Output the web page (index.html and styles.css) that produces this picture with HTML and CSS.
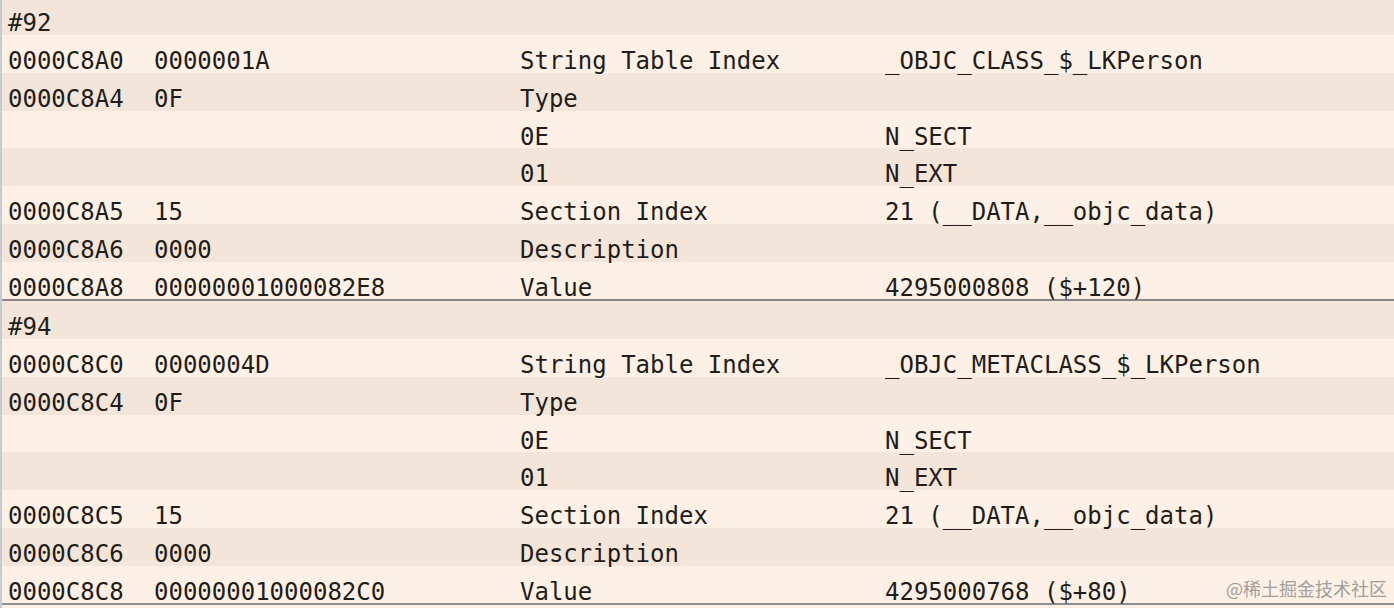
FILE: index.html
```html
<!DOCTYPE html>
<html>
<head>
<meta charset="utf-8">
<link rel="stylesheet" href="styles.css">
</head>
<body>
<div class="table">
  <div class="group first">
    <div class="row head"><span class="c1">#92</span><span></span><span></span><span></span></div>
    <div class="row light"><span>0000C8A0</span><span>0000001A</span><span>String Table Index</span><span>_OBJC_CLASS_$_LKPerson</span></div>
    <div class="row dark"><span>0000C8A4</span><span>0F</span><span>Type</span><span></span></div>
    <div class="row light"><span></span><span></span><span>0E</span><span>N_SECT</span></div>
    <div class="row dark"><span></span><span></span><span>01</span><span>N_EXT</span></div>
    <div class="row light"><span>0000C8A5</span><span>15</span><span>Section Index</span><span>21 (__DATA,__objc_data)</span></div>
    <div class="row dark"><span>0000C8A6</span><span>0000</span><span>Description</span><span></span></div>
    <div class="row light"><span>0000C8A8</span><span>00000001000082E8</span><span>Value</span><span>4295000808 ($+120)</span></div>
  </div>
  <div class="sep"></div>
  <div class="group">
    <div class="row head"><span class="c1">#94</span><span></span><span></span><span></span></div>
    <div class="row light"><span>0000C8C0</span><span>0000004D</span><span>String Table Index</span><span>_OBJC_METACLASS_$_LKPerson</span></div>
    <div class="row dark"><span>0000C8C4</span><span>0F</span><span>Type</span><span></span></div>
    <div class="row light"><span></span><span></span><span>0E</span><span>N_SECT</span></div>
    <div class="row dark"><span></span><span></span><span>01</span><span>N_EXT</span></div>
    <div class="row light"><span>0000C8C5</span><span>15</span><span>Section Index</span><span>21 (__DATA,__objc_data)</span></div>
    <div class="row dark"><span>0000C8C6</span><span>0000</span><span>Description</span><span></span></div>
    <div class="row light"><span>0000C8C8</span><span>00000001000082C0</span><span>Value</span><span>4295000768 ($+80)</span></div>
  </div>
  <div class="bottom"></div>
  <div class="watermark">@稀土掘金技术社区</div>
</div>
</body>
</html>
```
FILE: styles.css
```css
html, body {
  margin: 0;
  padding: 0;
  background: #c9ccd4;
  overflow: hidden;
}
.table {
  position: relative;
  width: 1394px;
  height: 608px;
  overflow: hidden;
  background: #fcefe5;
  border-left: 2px solid #c7cad4;
  box-sizing: border-box;
  font-family: "DejaVu Sans Mono", "Liberation Mono", monospace;
  font-size: 24px;
  color: #221d19;
}
.group {
  display: flex;
  flex-direction: column;
}
.group.first {
  margin-top: -2.75px;
}
.row {
  display: grid;
  grid-template-columns: 146px 366px 365px 1fr;
  height: 37.75px;
  box-sizing: border-box;
  padding: 12px 0 0 6px;
  line-height: 28px;
  white-space: pre;
}
.row span {
  position: relative;
  z-index: 1;
}
.row.light {
  background: #fdf0e6;
}
.row.dark, .row.head {
  background: #f3e5da;
}
.sep {
  height: 2px;
  background: #8c8585;
}
.bottom {
  height: 2px;
  background: #8e8c8c;
}
.watermark {
  position: absolute;
  right: 7px;
  bottom: 8px;
  z-index: 2;
  font-family: "Noto Sans CJK SC", sans-serif;
  font-size: 18px;
  line-height: 24px;
  color: #a29e9a;
}
```
